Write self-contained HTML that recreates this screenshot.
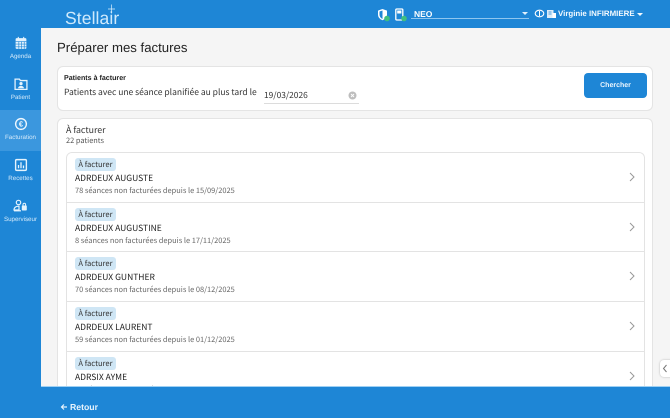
<!DOCTYPE html>
<html lang="fr"><head><meta charset="utf-8"><title>Stellair</title>
<style>
html,body{margin:0;padding:0;width:670px;height:418px;overflow:hidden;background:#f5f5f5;font-family:"Liberation Sans",sans-serif;color:#212121;text-rendering:geometricPrecision}
div,span,svg{position:absolute;box-sizing:border-box;white-space:nowrap}
.n{font-family:"Noto Sans CJK JP","Liberation Sans",sans-serif}
.blue{background:#1e86d6}
.side{color:#d5eafa;font-size:6.2px;text-align:center;width:41px;left:0;line-height:8px}
.item{position:absolute;left:0;width:578px;height:50px;border-bottom:1px solid #e3e3e3;background:#fff}
.tag{left:8px;top:5px;height:13px;width:41px;background:#cfe6f5;border-radius:3px;font-size:7.6px;line-height:13px;text-align:center;color:#333}
.name{left:8px;top:18px;font-size:8.5px;line-height:14px;color:#222}
.sub{left:8px;top:32px;font-size:7.45px;line-height:12px;color:#666}
.chev{right:10px;top:19px}
</style></head><body>
<div class="blue" style="left:0;top:0;width:670px;height:28px"></div>
<div class="blue" style="left:0;top:28px;width:41px;height:360px"></div>
<div style="left:0;top:110px;width:41px;height:41px;background:#3b97de"></div>

<div style="left:65px;top:8px;font-size:17.5px;line-height:20px;color:#cfeafc;letter-spacing:.1px">Stellair</div>
<svg style="left:106px;top:4px" width="11" height="11" viewBox="0 0 11 11"><path d="M5.500 0.500v9M2 5h7" stroke="#dff1fd" stroke-width=".7"/></svg>

<svg style="left:377px;top:8px" width="13" height="14" viewBox="0 0 13 14"><path d="M5.500 1L10 2.600V6.500C10 9.500 8 11.200 5.500 12.200 3 11.200 1 9.500 1 6.500V2.600Z" fill="#fff"/><path d="M5.500 2.500V11C3.500 10 2.500 8.500 2.500 6.500V3.500Z" fill="#1e86d6"/><circle cx="10" cy="10.500" r="2.800" fill="#3fbf7f"/></svg>
<svg style="left:394px;top:8px" width="13" height="14" viewBox="0 0 13 14"><rect x="1.800" y="1" width="7" height="11" rx="1" fill="none" stroke="#fff" stroke-width="1.300"/><rect x="3.200" y="2.500" width="4.200" height="3" fill="#fff"/><circle cx="10" cy="10.500" r="2.800" fill="#3fbf7f"/></svg>

<div style="left:414px;top:8px;font-size:8.500px;line-height:12px;font-weight:bold;color:#fff">NEO</div>
<div style="left:411px;top:18px;width:118px;height:1px;background:#8ec6ef"></div>
<div style="left:522px;top:12px;width:0;height:0;border:3px solid transparent;border-top:3.500px solid #dff0fc"></div>
<svg style="left:534px;top:9px" width="11" height="10" viewBox="0 0 11 10"><ellipse cx="5.500" cy="4.500" rx="4.300" ry="3.300" fill="none" stroke="#fff" stroke-width="1.100"/><path d="M5.500 2v5" stroke="#fff" stroke-width="1"/></svg>
<svg style="left:546px;top:9px" width="11" height="10" viewBox="0 0 11 10"><rect x="1" y="1" width="6.500" height="8" fill="#dcecf8"/><rect x="6.500" y="4" width="3.500" height="5" fill="#fff"/><path d="M2.500 3h3M2.500 5h3" stroke="#1e86d6" stroke-width=".8"/></svg>
<div style="left:558px;top:8px;font-size:7.9px;line-height:12px;font-weight:bold;color:#f2f9fe">Virginie INFIRMIERE</div>
<div style="left:637px;top:12.500px;width:0;height:0;border:3.200px solid transparent;border-top:3.500px solid #f2f9fe"></div>

<svg style="left:14px;top:36px" width="14" height="14" viewBox="0 0 13 13"><rect x="1.500" y="2" width="10" height="10" rx="1" fill="#e5f3fd"/><path d="M1.500 5.200h10M4.500 5v7M7 5v7M9.500 5v7M1.500 7.500h10M1.500 10h10" stroke="#1e86d6" stroke-width=".6"/><path d="M4 .8v2M9 .8v2" stroke="#e5f3fd" stroke-width="1"/></svg>
<div class="side" style="top:53px">Agenda</div>
<svg style="left:14px;top:77px" width="14" height="14" viewBox="0 0 13 13"><path d="M1 2h4l1 1.300h6V11.500H1Z" fill="none" stroke="#e5f3fd" stroke-width="1.200"/><circle cx="6.500" cy="6.200" r="1.500" fill="#e5f3fd"/><path d="M3.800 10.500c0-3 5.400-3 5.400 0Z" fill="#e5f3fd"/></svg>
<div class="side" style="top:94px">Patient</div>
<svg style="left:14px;top:117px" width="14" height="14" viewBox="0 0 13 13"><circle cx="6.500" cy="6.500" r="5" fill="none" stroke="#eef7fe" stroke-width="1.300"/><text x="6.500" y="9" font-size="7" font-weight="bold" text-anchor="middle" fill="#eef7fe" font-family="Liberation Sans">€</text></svg>
<div class="side" style="top:134px">Facturation</div>
<svg style="left:14px;top:158px" width="14" height="14" viewBox="0 0 13 13"><rect x="1.500" y="1.500" width="10" height="10" rx="1" fill="none" stroke="#e5f3fd" stroke-width="1.300"/><path d="M4.200 9.500V6.500M6.500 9.500V4M8.800 9.500V7" stroke="#e5f3fd" stroke-width="1.200"/></svg>
<div class="side" style="top:175px">Recettes</div>
<svg style="left:13px;top:199px" width="15" height="14" viewBox="0 0 15 14"><circle cx="5.500" cy="3.500" r="2.200" fill="none" stroke="#e5f3fd" stroke-width="1.200"/><path d="M1 11c0-3 3-4 5-3.800V11Z" fill="none" stroke="#e5f3fd" stroke-width="1.200"/><path d="M1 11.800h7" stroke="#e5f3fd" stroke-width="1.200"/><rect x="8.800" y="6.500" width="5" height="5" rx=".7" fill="#e5f3fd"/><path d="M10 6.500V5.500a1.300 1.300 0 0 1 2.600 0v1" fill="none" stroke="#e5f3fd"/></svg>
<div class="side" style="top:216px">Superviseur</div>

<div style="left:57px;top:38.500px;font-size:13.200px;line-height:18px;color:#222">Préparer mes factures</div>

<div style="left:57px;top:66px;width:596px;height:45px;background:#fff;border:1px solid #e4e4e4;border-radius:6px"></div>
<div style="left:64px;top:73px;font-size:7.100px;line-height:10px;font-weight:bold;color:#222">Patients à facturer</div>
<div class="n" style="left:64px;top:85px;font-size:8.500px;line-height:14px;color:#333">Patients avec une séance planifiée au plus tard le</div>
<div class="n" style="left:264px;top:88px;font-size:8.400px;line-height:14px;color:#333">19/03/2026</div>
<div style="left:264px;top:103px;width:95px;height:1px;background:#dcdcdc"></div>
<svg style="left:348px;top:91px" width="9" height="9" viewBox="0 0 9 9"><circle cx="4.500" cy="4.500" r="4" fill="#bdbdbd"/><path d="M3 3l3 3M6 3l-3 3" stroke="#fff" stroke-width=".9"/></svg>
<div class="blue" style="left:584px;top:73px;width:63px;height:25px;border-radius:4px;color:#eaf5fd;font-size:7px;font-weight:bold;line-height:25px;text-align:center">Chercher</div>

<div style="left:57px;top:118px;width:596px;height:290px;background:#fff;border:1px solid #e4e4e4;border-radius:6px"></div>
<div class="n" style="left:66px;top:123px;font-size:8.800px;line-height:14px;color:#333">À facturer</div>
<div class="n" style="left:66px;top:134.500px;font-size:7.400px;line-height:12px;color:#555">22 patients</div>

<div style="left:66px;top:152px;width:579px;height:240px;border:1px solid #e3e3e3;border-bottom:0;border-radius:6px 6px 0 0;overflow:hidden;background:#fff">
<div class="item" style="top:0"><div class="tag n">À facturer</div><div class="name n">ADRDEUX AUGUSTE</div><div class="sub n">78 séances non facturées depuis le 15/09/2025</div><svg class="chev" width="6" height="10" viewBox="0 0 6 10"><path d="M1 1l4 4-4 4" fill="none" stroke="#999" stroke-width="1"/></svg></div>
<div class="item" style="top:50px;height:49px"><div class="tag n">À facturer</div><div class="name n">ADRDEUX AUGUSTINE</div><div class="sub n">8 séances non facturées depuis le 17/11/2025</div><svg class="chev" width="6" height="10" viewBox="0 0 6 10"><path d="M1 1l4 4-4 4" fill="none" stroke="#999" stroke-width="1"/></svg></div>
<div class="item" style="top:99px"><div class="tag n">À facturer</div><div class="name n">ADRDEUX GUNTHER</div><div class="sub n">70 séances non facturées depuis le 08/12/2025</div><svg class="chev" width="6" height="10" viewBox="0 0 6 10"><path d="M1 1l4 4-4 4" fill="none" stroke="#999" stroke-width="1"/></svg></div>
<div class="item" style="top:149px"><div class="tag n">À facturer</div><div class="name n">ADRDEUX LAURENT</div><div class="sub n">59 séances non facturées depuis le 01/12/2025</div><svg class="chev" width="6" height="10" viewBox="0 0 6 10"><path d="M1 1l4 4-4 4" fill="none" stroke="#999" stroke-width="1"/></svg></div>
<div class="item" style="top:199px"><div class="tag n">À facturer</div><div class="name n">ADRSIX AYME</div><div class="sub n">62 séances non facturées depuis le 22/12/2025</div><svg class="chev" width="6" height="10" viewBox="0 0 6 10"><path d="M1 1l4 4-4 4" fill="none" stroke="#999" stroke-width="1"/></svg></div>
</div>

<div style="left:660px;top:360px;width:12px;height:17px;background:#fff;border-radius:4px 0 0 4px;box-shadow:0 0 2px rgba(0,0,0,.25)"></div>
<svg style="left:662px;top:364px" width="6" height="9" viewBox="0 0 6 9"><path d="M4.500 1L1.500 4.500l3 3.500" fill="none" stroke="#777" stroke-width="1"/></svg>

<div class="blue" style="left:0;top:387px;width:670px;height:31px"></div>
<div style="left:41px;top:386px;width:629px;height:1px;background:#9fd0f3"></div>
<svg style="left:60px;top:403px" width="8" height="8" viewBox="0 0 8 8"><path d="M7 4H1.500M4 1.500L1.500 4 4 6.500" fill="none" stroke="#e6f3fd" stroke-width="1.200"/></svg>
<div style="left:70px;top:401px;font-size:8.700px;line-height:12px;font-weight:bold;color:#e6f3fd">Retour</div>
</body></html>
